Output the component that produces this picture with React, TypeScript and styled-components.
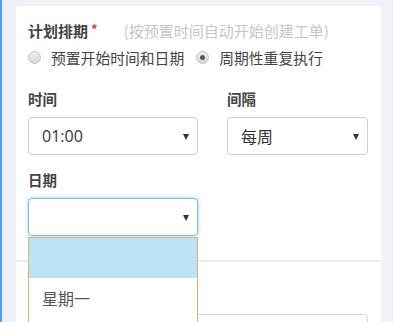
import React from 'react';
import styled, { createGlobalStyle } from 'styled-components';

const GlobalStyle = createGlobalStyle`
  html, body {
    margin: 0;
    padding: 0;
    background: #eef1f8;
    overflow: hidden;
  }
  body {
    font-family: 'Open Sans', 'Noto Sans CJK SC', sans-serif;
    color: #333;
  }
`;

const Page = styled.div`
  display: flex;
  width: 393px;
  height: 322px;
  overflow: hidden;
`;

const SideStrip = styled.div`
  width: 2px;
  flex-shrink: 0;
  background: #4ea4e9;
`;

const Main = styled.div`
  flex: 1;
  display: flex;
  padding: 6px 0 0 14px;
`;

const Card = styled.div`
  width: 365px;
  flex-shrink: 0;
  background: #fff;
  border-radius: 4px 4px 0 0;
  padding: 14px 12px 0 12px;
  box-sizing: border-box;
`;

const Gutter = styled.div`
  flex: 1;
  background: #f3f4fa;
  border-right: 1px solid #e8eaf2;
`;

const TitleRow = styled.div`
  display: flex;
  align-items: center;
  height: 20px;
  font-family: 'Noto Sans CJK SC', sans-serif;
`;

const Title = styled.span`
  font-size: 15px;
  font-weight: 700;
  color: #444;
`;

const Required = styled.span`
  color: #e53935;
  font-size: 13px;
  font-weight: 700;
  margin-left: 3px;
  position: relative;
  top: -2px;
`;

const Hint = styled.span`
  margin-left: 26px;
  font-size: 15px;
  color: #c4c6cc;
`;

const RadioRow = styled.div`
  display: flex;
  align-items: center;
  height: 22px;
  margin-top: 6px;
  gap: 12px;
  font-family: 'Noto Sans CJK SC', sans-serif;
`;

const RadioOption = styled.label`
  display: flex;
  align-items: center;
  gap: 10px;
  font-size: 14.8px;
  color: #444;
`;

const RadioDot = styled.span<{ $checked?: boolean }>`
  position: relative;
  width: 13px;
  height: 13px;
  border-radius: 50%;
  box-sizing: border-box;
  border: 1px solid #c2c2c2;
  background: linear-gradient(#f0f0f0, #d6d6d6);
  &::after {
    content: '';
    display: ${({ $checked }) => ($checked ? 'block' : 'none')};
    position: absolute;
    left: 3px;
    top: 3px;
    width: 5px;
    height: 5px;
    border-radius: 50%;
    background: #555;
  }
`;

const FieldGrid = styled.div`
  display: grid;
  grid-template-columns: 170px 141px;
  column-gap: 29px;
  row-gap: 15px;
  margin-top: 21px;
`;

const Field = styled.div`
  display: flex;
  flex-direction: column;
  position: relative;
`;

const FieldLabel = styled.div`
  height: 20px;
  line-height: 20px;
  margin-bottom: 8px;
  font-family: 'Noto Sans CJK SC', sans-serif;
  font-size: 14.5px;
  font-weight: 700;
  color: #444;
`;

const SelectBox = styled.div<{ $focused?: boolean }>`
  height: 38px;
  box-sizing: border-box;
  display: flex;
  align-items: center;
  justify-content: space-between;
  padding: 0 8px 0 13px;
  border-radius: 4px;
  background: #fff;
  border: 1px solid ${({ $focused }) => ($focused ? '#7cb8ee' : '#cfcfcf')};
  box-shadow: ${({ $focused }) =>
    $focused ? '0 0 4px rgba(102, 175, 233, 0.6)' : 'none'};
  font-size: 16px;
  color: #333;
`;

const CjkValue = styled.span`
  font-family: 'Noto Sans CJK SC', sans-serif;
`;

const Arrow = styled.span`
  width: 0;
  height: 0;
  border-left: 3.5px solid transparent;
  border-right: 3.5px solid transparent;
  border-top: 6px solid #333;
  margin-top: 1px;
`;

const DropList = styled.ul`
  position: absolute;
  top: 100%;
  left: 0;
  width: 170px;
  box-sizing: border-box;
  margin: 1px 0 0 0;
  padding: 0 0 40px 0;
  list-style: none;
  background: #fff;
  border: 1px solid #d9b36c;
  z-index: 10;
`;

const DropItem = styled.li<{ $active?: boolean }>`
  height: 40px;
  line-height: 40px;
  padding-left: 13px;
  font-family: 'Noto Sans CJK SC', sans-serif;
  font-size: 16px;
  color: #555;
  background: ${({ $active }) => ($active ? '#bde3f6' : '#fff')};
`;

const Divider = styled.hr`
  border: none;
  border-top: 2px solid #ececec;
  margin: 24px -12px 0 -12px;
`;

const NextSection = styled.div`
  padding-top: 52px;
`;

const TextInput = styled.div`
  height: 38px;
  width: 340px;
  box-sizing: border-box;
  border: 1px solid #d6d6d6;
  border-radius: 4px;
`;

const days = ['', '星期一'];

export default function App() {
  return (
    <>
      <GlobalStyle />
      <Page>
        <SideStrip />
        <Main>
          <Card>
            <TitleRow>
              <Title>计划排期</Title>
              <Required>*</Required>
              <Hint>(按预置时间自动开始创建工单)</Hint>
            </TitleRow>
            <RadioRow>
              <RadioOption>
                <RadioDot />
                预置开始时间和日期
              </RadioOption>
              <RadioOption>
                <RadioDot $checked />
                周期性重复执行
              </RadioOption>
            </RadioRow>
            <FieldGrid>
              <Field>
                <FieldLabel>时间</FieldLabel>
                <SelectBox>
                  01:00
                  <Arrow />
                </SelectBox>
              </Field>
              <Field>
                <FieldLabel>间隔</FieldLabel>
                <SelectBox>
                  <CjkValue>每周</CjkValue>
                  <Arrow />
                </SelectBox>
              </Field>
              <Field>
                <FieldLabel>日期</FieldLabel>
                <SelectBox $focused>
                  <span />
                  <Arrow />
                </SelectBox>
                <DropList>
                  {days.map((d, i) => (
                    <DropItem key={i} $active={i === 0}>
                      {d}
                    </DropItem>
                  ))}
                </DropList>
              </Field>
            </FieldGrid>
            <Divider />
            <NextSection>
              <TextInput />
            </NextSection>
          </Card>
          <Gutter />
        </Main>
      </Page>
    </>
  );
}
